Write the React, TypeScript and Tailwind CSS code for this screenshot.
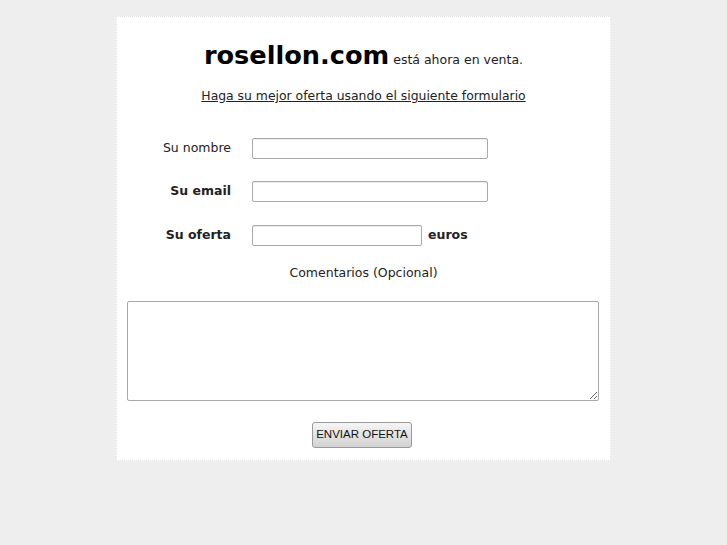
export default function App() {
  const font = "font-['DejaVu_Sans',sans-serif]";
  return (
    <div className={`min-h-[545px] bg-[#eeeeee] pt-[16px] ${font} text-[#222]`}>
      <div className="ml-[116px] w-[495px] border border-dotted border-[#e2e2e2] bg-white pb-[12px]">
        <div className="flex items-baseline justify-center pt-[23px] leading-[30px]">
          <span className="text-[25.6px] font-bold text-black">rosellon.com</span>
          <span className="ml-[4px] text-[12.5px] text-[#222]">está ahora en venta.</span>
        </div>
        <div className="mt-[13px] text-center text-[12.4px] leading-[15px]">
          <a href="#" className="text-[#222] underline">
            Haga su mejor oferta usando el siguiente formulario
          </a>
        </div>

        <form className="mt-[35px] flex flex-col" onSubmit={(e) => e.preventDefault()}>
          <div className="flex h-[21px] items-center">
            <label className="w-[114px] text-right text-[12.5px]">Su nombre</label>
            <input className="ml-[21px] h-[21px] w-[236px] rounded-[2px] border border-[#a9a9a9] bg-white shadow-[inset_0_1px_1px_rgba(0,0,0,0.08)]" />
          </div>
          <div className="mt-[22px] flex h-[21px] items-center">
            <label className="w-[114px] text-right text-[12.5px] font-bold">Su email</label>
            <input className="ml-[21px] h-[21px] w-[236px] rounded-[2px] border border-[#a9a9a9] bg-white shadow-[inset_0_1px_1px_rgba(0,0,0,0.08)]" />
          </div>
          <div className="mt-[23px] flex h-[21px] items-center">
            <label className="w-[114px] text-right text-[12.5px] font-bold">Su oferta</label>
            <input className="ml-[21px] h-[21px] w-[170px] rounded-[2px] border border-[#a9a9a9] bg-white shadow-[inset_0_1px_1px_rgba(0,0,0,0.08)]" />
            <span className="ml-[6px] text-[12.5px] font-bold">euros</span>
          </div>
          <div className="mt-[19px] text-center text-[12.5px] leading-[15px]">Comentarios (Opcional)</div>
          <textarea className="ml-[10px] mt-[21px] block h-[100px] w-[472px] resize rounded-[2px] border border-[#a9a9a9] bg-white" />
          <div className="mt-[21px] flex justify-center pr-[3px]">
            <button
              type="submit"
              className="h-[26px] w-[100px] rounded-[3px] border border-[#9a9a9a] bg-gradient-to-b from-[#f6f6f6] to-[#d2d2d2] font-['Liberation_Sans',Arial,sans-serif] text-[11.5px] text-[#111]"
            >
              ENVIAR OFERTA
            </button>
          </div>
        </form>
      </div>
    </div>
  );
}
